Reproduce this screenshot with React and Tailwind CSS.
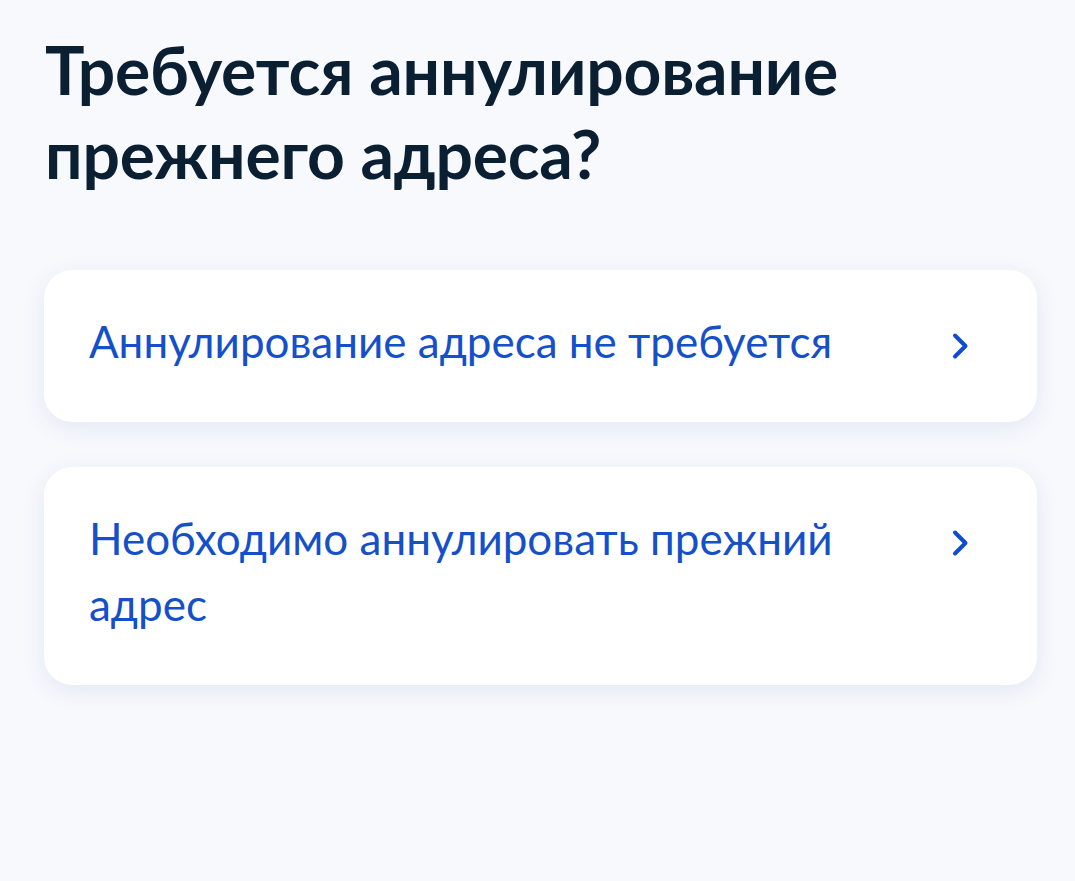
import React from 'react';

const options = [
    'Аннулирование адреса не требуется',
    'Необходимо аннулировать прежний адрес',
];

const Chevron = () => (
    <svg className="w-[18px] h-[28px] shrink-0" viewBox="0 0 18 28" fill="none">
        <path d="M4 3.5L14.5 14L4 24.5" stroke="#0d4cd3" strokeWidth="4" strokeLinecap="round" strokeLinejoin="round" />
    </svg>
);

const App = () => {
    return (
        <div className="min-h-[881px] w-full bg-[#f8f9fd] font-['Lato',sans-serif] pt-[28px]">
            <h1 className="ml-[45px] text-[66px] leading-[84px] font-bold text-[#0b1f33] tracking-[-0.2px]">
                Требуется аннулирование
                <br />
                прежнего адреса?
            </h1>

            {/* Options */}
            <div className="ml-[44px] w-[993px] mt-[74px] flex flex-col gap-[45px]">
                {options.map((label) => (
                    <button
                        key={label}
                        className="w-full bg-white rounded-[28px] shadow-[0_6px_24px_rgba(20,60,160,0.09)] pl-[45px] pr-[68px] pt-[38px] pb-[48px] flex items-start justify-between text-left"
                    >
                        <span className="max-w-[780px] text-[44px] leading-[66px] text-[#1550c8]">{label}</span>
                        <span className="mt-[24px]"><Chevron /></span>
                    </button>
                ))}
            </div>
        </div>
    );
};

export default App;
